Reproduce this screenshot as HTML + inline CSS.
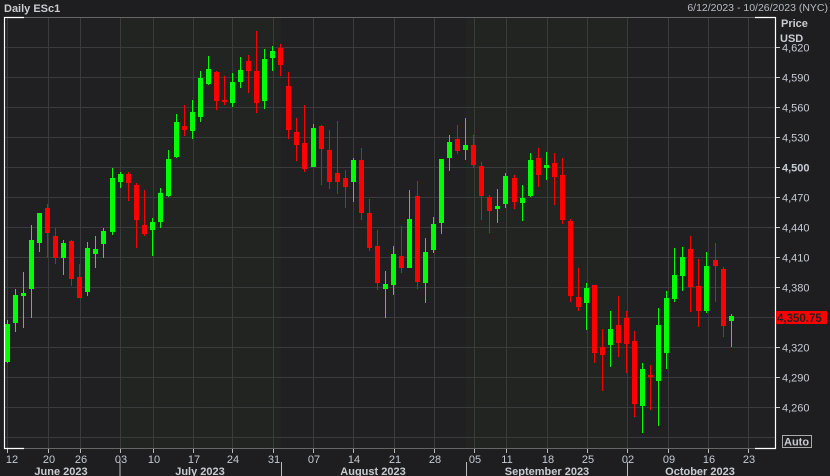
<!DOCTYPE html>
<html><head><meta charset="utf-8"><style>
html,body{margin:0;padding:0;background:#1e1e21;width:830px;height:476px;overflow:hidden;font-family:"Liberation Sans",sans-serif}
svg{display:block}
</style></head><body>
<svg id="s" width="830" height="476" xmlns="http://www.w3.org/2000/svg" font-family="Liberation Sans, sans-serif">
<rect width="830" height="476" fill="#1e1e21"/>
<rect x="4" y="17" width="116" height="431" fill="#202023"/>
<rect x="120" y="17" width="161" height="431" fill="#222421"/>
<rect x="281" y="17" width="185" height="431" fill="#202023"/>
<rect x="466" y="17" width="161" height="431" fill="#222421"/>
<rect x="627" y="17" width="148" height="431" fill="#202023"/>
<g id="grid" stroke="#3a3b3c" stroke-width="1"></g>
<g id="candles"></g>
<g stroke="#fff" stroke-width="1.2" fill="none">
<path d="M24 17.5H4.5V448.5H24"/>
<path d="M755 17.5H775.5V448.5H755"/>
</g>
<g stroke="#666" stroke-width="1"><path d="M24 17.5H755"/><path d="M24 448.5H755"/></g>
<text x="4" y="12" fill="#c9ccd1" font-size="11" font-weight="bold">Daily ESc1</text>
<text x="828" y="11" fill="#b8bcc2" font-size="10.5" text-anchor="end">6/12/2023 - 10/26/2023 (NYC)</text>
<text x="781" y="27" fill="#c9ccd1" font-size="11" font-weight="bold">Price</text>
<text x="780" y="42" fill="#c9ccd1" font-size="11" font-weight="bold">USD</text>
<g id="ylab" fill="#c5cbd3" font-size="11"></g>
<rect x="776" y="311" width="51" height="13" fill="#ff0000"/>
<text x="777" y="322" fill="#222" font-size="11.5" font-weight="bold">4,350.75</text>
<rect x="782.5" y="435.5" width="29" height="12" fill="none" stroke="#aaa"/>
<text x="784" y="445.5" fill="#c9ccd1" font-size="11" font-weight="bold">Auto</text>
<g id="xlab" fill="#c5cbd3" font-size="11" text-anchor="middle"></g>
<g fill="#c9ccd1" font-size="11" font-weight="bold" text-anchor="middle">
<text x="61" y="475">June 2023</text>
<text x="200" y="475">July 2023</text>
<text x="373" y="475">August 2023</text>
<text x="547" y="475">September 2023</text>
<text x="700" y="475">October 2023</text>
</g>
<g stroke="#bbb"><path d="M120 462V476M281.5 462V476M466.5 462V476M627.5 462V476"/></g>
</svg>
<script>
var NS="http://www.w3.org/2000/svg";
function el(p,t,a,txt){var e=document.createElementNS(NS,t);for(var k in a)e.setAttribute(k,a[k]);if(txt)e.textContent=txt;document.getElementById(p).appendChild(e);return e;}
var ys=[4620,4590,4560,4530,4500,4470,4440,4410,4380,4350,4320,4290,4260,4230];
ys.forEach(function(v,i){var y=47.5+30*i;el("grid","path",{d:"M5 "+y+"H775"});
if(v!=4230){el("grid","path",{d:"M775 "+y+"H780",stroke:"#ccc"});
var t=el("ylab","text",{x:782,y:y+4},(v+"").replace(/(\d)(\d{3})$/,"$1,$2"));if(v==4500)t.setAttribute("font-weight","bold");}});
var xs=[[7,"12"],[48,"20"],[80,"26"],[120,"03"],[153,"10"],[193,"17"],[232,"24"],[273,"31"],[313,"07"],[353,"14"],[394,"21"],[434,"28"],[474,"05"],[506,"11"],[547,"18"],[587,"25"],[627,"02"],[668,"09"],[708,"16"],[748,"23"]];
xs.forEach(function(a,i){var x=a[0]+0.5;el("grid","path",{d:"M"+x+" 18V448"});el("grid","path",{d:"M"+x+" 449V453",stroke:"#bbb"});
el("xlab","text",{x:(i==0?12:a[0]+1),y:463},a[1]);});
var C=[
[320,363,324,362,1],[289,332,295,323,1],[272,328,293,296,1],[225,318,240,289,1],[213,252,213,243,1],[204,257,208,233,0],[228,264,236,258,0],[240,275,243,258,1],[240,286,241,279,0],[264,298,277,298,0],
[242,296,248,292,1],[236,268,249,254,1],[228,258,231,244,1],[168,235,178,232,1],[172,188,174,182,1],[172,201,174,183,0],[183,248,185,220,0],[190,236,225,234,0],[218,256,222,230,1],[188,228,193,222,1],
[150,197,159,196,1],[114,158,122,157,1],[105,136,126,130,0],[100,139,112,131,1],[71,122,78,117,1],[56,85,69,84,1],[71,110,72,101,0],[76,105,100,102,0],[73,107,82,103,1],[57,88,70,82,1],
[55,93,61,71,0],[31,113,71,103,0],[49,109,59,101,1],[46,71,51,58,1],[44,76,48,65,0],[72,139,86,130,0],[118,161,132,145,0],[105,172,143,169,0],[124,167,128,167,1],[125,185,126,149,0],
[130,189,150,182,0],[121,194,173,182,0],[170,208,178,187,0],[158,202,160,182,1],[148,220,160,213,0],[199,251,213,248,0],[230,290,246,283,0],[271,318,284,289,1],[246,295,254,285,1],[226,273,256,268,0],
[190,268,219,268,1],[181,289,196,282,0],[238,303,252,283,1],[217,253,224,250,1],[159,234,159,223,1],[135,171,142,158,1],[125,154,139,151,0],[118,160,145,150,1],[135,168,145,165,0],[162,220,166,196,0],
[195,233,197,211,0],[189,223,206,209,1],[173,208,176,204,1],[175,209,178,202,0],[185,221,198,203,1],[153,197,160,196,1],[148,187,158,175,0],[152,180,165,168,1],[153,205,163,177,0],[158,224,175,220,0],
[219,302,221,296,0],[268,311,297,307,0],[283,330,288,303,1],[285,363,285,353,0],[329,391,347,355,0],[311,367,329,345,1],[296,357,325,343,0],[311,373,318,344,0],[331,417,341,404,0],[363,433,369,406,1],
[365,410,375,377,0],[308,426,325,381,1],[291,369,298,353,1],[248,302,275,299,1],[247,291,257,276,1],[236,312,249,287,0],[259,327,286,311,0],[252,313,266,311,1],[243,302,260,266,0],[267,337,269,326,0],
[314,347,316,321,1]];
C.forEach(function(c,i){var x=Math.round(7+8.04*i);var col=c[4]?"#00ff00":"#ff0000";
el("candles","rect",{x:x,y:c[0],width:1,height:c[1]-c[0],fill:col});
var h=Math.max(2,c[3]-c[2]);el("candles","rect",{x:x-2,y:c[2],width:5,height:h,fill:col});});
</script>
</body></html>
